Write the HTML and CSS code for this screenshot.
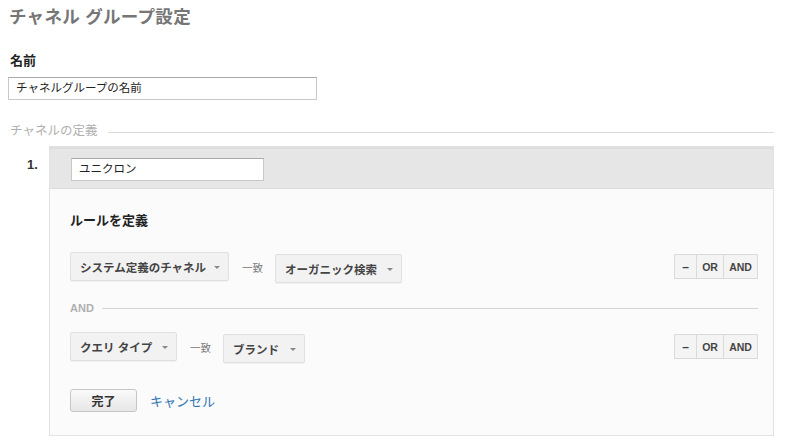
FILE: index.html
```html
<!DOCTYPE html>
<html lang="ja">
<head>
<meta charset="utf-8">
<link rel="stylesheet" href="styles.css">
</head>
<body>
<div class="page">
  <h1 class="title">チャネル グループ設定</h1>
  <div class="field-label">名前</div>
  <div class="text-input name-input">チャネルグループの名前</div>
  <div class="section-head"><span>チャネルの定義</span><span class="rule"></span></div>
  <div class="channel">
    <div class="num">1.</div>
    <div class="card">
      <div class="card-head">
        <div class="text-input channel-input">ユニクロン</div>
      </div>
      <div class="card-body">
        <div class="rule-title">ルールを定義</div>
        <div class="cond">
          <div class="dd dd-a">システム定義のチャネル<span class="caret"></span></div>
          <span class="match">一致</span>
          <div class="dd dd-b">オーガニック検索<span class="caret"></span></div>
          <div class="ops"><span class="op op-minus">–</span><span class="op op-or">OR</span><span class="op op-and">AND</span></div>
        </div>
        <div class="and-sep"><span>AND</span><span class="rule"></span></div>
        <div class="cond cond2">
          <div class="dd dd-c">クエリ タイプ<span class="caret"></span></div>
          <span class="match">一致</span>
          <div class="dd dd-d">ブランド<span class="caret"></span></div>
          <div class="ops"><span class="op op-minus">–</span><span class="op op-or">OR</span><span class="op op-and">AND</span></div>
        </div>
        <div class="actions">
          <button class="done">完了</button>
          <a class="cancel">キャンセル</a>
        </div>
      </div>
    </div>
  </div>
</div>
</body>
</html>
```

FILE: styles.css
```css
* { box-sizing: border-box; }
html, body { margin: 0; padding: 0; background: #fff; }
body {
  font-family: "Liberation Sans", Arial, "Noto Sans CJK JP", sans-serif;
  color: #333;
  font-size: 12px;
}
.page { padding: 5px 17px 0 8px; }
.title {
  margin: 0 0 0 1px;
  font-size: 17.5px;
  line-height: 24px;
  font-weight: bold;
  color: #767676;
  letter-spacing: 0.3px;
}
.field-label {
  margin-top: 24px;
  margin-left: 2px;
  font-size: 13px;
  font-weight: bold;
  color: #222;
  line-height: 16px;
}
.text-input {
  background: #fff;
  border: 1px solid #c8c8c8;
  border-top-color: #a9a9a9;
  font-size: 11.5px;
  color: #222;
  height: 23px;
  line-height: 21px;
  padding-left: 7px;
}
.name-input { margin-top: 8px; width: 309px; }
.section-head {
  display: flex;
  align-items: center;
  margin-top: 22px;
  margin-left: 2px;
  color: #b0b0b0;
  font-size: 12.5px;
  line-height: 18px;
}
.section-head .rule {
  flex: 1;
  height: 1px;
  background: #dcdcdc;
  margin-left: 11px;
  margin-top: 2px;
}
.channel {
  display: flex;
  margin-top: 6px;
}
.num {
  width: 41px;
  padding-left: 19px;
  padding-top: 11px;
  font-weight: bold;
  font-size: 13px;
  color: #333;
}
.card {
  width: 725px;
  border: 1px solid #e2e2e2;
  background: #fbfbfb;
  height: 290px;
}
.card-head {
  background: #e6e6e6;
  border-bottom: 1px solid #dcdcdc;
  border-top: 2px solid #dedede;
  height: 42px;
  padding: 9px 0 0 21px;
}
.channel-input { width: 193px; }
.card-body {
  padding: 23px 15px 0 20px;
}
.rule-title {
  font-size: 13px;
  font-weight: bold;
  color: #222;
  line-height: 18px;
}
.cond {
  display: flex;
  align-items: center;
  margin-top: 22px;
  height: 31px;
}
.cond2 { margin-top: 17px; }
.dd {
  display: flex;
  align-items: center;
  height: 29px;
  padding: 0 8px 0 9px;
  font-size: 11.5px;
  font-weight: bold;
  color: #444;
  background: #f2f2f2;
  border: 1px solid #e0e0e0;
  border-radius: 2px;
  box-shadow: 0 1px 0 rgba(0,0,0,0.04);
}
.dd-a { width: 159px; margin-top: -2px; }
.dd-b { width: 127px; margin-top: 2px; }
.dd-c { width: 107px; margin-top: -2px; }
.dd-d { width: 82px; margin-top: 2px; }
.caret {
  margin-left: auto;
  width: 0; height: 0;
  border-left: 3px solid transparent;
  border-right: 3px solid transparent;
  border-top: 3px solid #888;
  margin-top: 1px;
}
.match {
  font-size: 10.5px;
  color: #777;
  margin: 0 12px 0 13px;
}
.ops {
  margin-left: auto;
  margin-top: -2px;
  display: flex;
  height: 25px;
  border: 1px solid #dadada;
  background: #f4f4f4;
}
.op {
  display: flex;
  align-items: center;
  justify-content: center;
  font-size: 10.5px;
  font-weight: bold;
  color: #444;
  border-left: 1px solid #dadada;
}
.op:first-child { border-left: none; }
.op-minus { width: 21px; font-size: 12px; }
.op-or { width: 27px; }
.op-and { width: 34px; }
.and-sep {
  display: flex;
  align-items: center;
  margin-top: 18px;
  color: #b0b0b0;
  font-size: 11px;
  font-weight: bold;
  line-height: 14px;
}
.and-sep .rule {
  flex: 1;
  height: 1px;
  background: #d4d4d4;
  margin-left: 8px;
}
.actions {
  display: flex;
  align-items: center;
  margin-top: 26px;
}
.done {
  width: 67px;
  height: 23px;
  font-family: inherit;
  font-size: 12px;
  font-weight: bold;
  color: #333;
  background: linear-gradient(#fafafa, #e6e6e6);
  border: 1px solid #c6c6c6;
  border-radius: 3px;
  padding: 0;
}
.cancel {
  margin-left: 13px;
  color: #2f74b5;
  font-size: 13px;
  cursor: pointer;
}
```
